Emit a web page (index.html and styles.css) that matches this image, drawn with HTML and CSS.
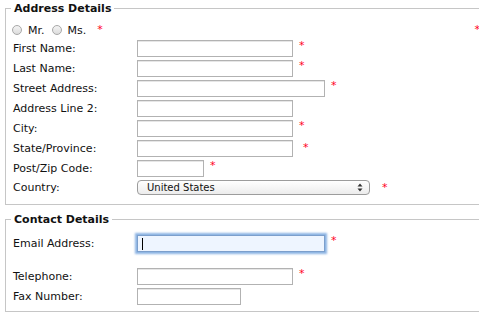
FILE: index.html
```
<!DOCTYPE html>
<html lang="en">
<head>
  <meta charset="UTF-8" />
  <meta name="viewport" content="width=device-width, initial-scale=1.0"/>
  <title>Registration - Address Form</title>
  <link rel="stylesheet" href="styles.css">
</head>
<body>

  <form class="signup" id="signupForm">
    <fieldset class="group">
      <legend>Address Details</legend>

      <div class="salutation">
        <label class="choice"><input type="radio" name="title" value="mr"> Mr.</label>
        <label class="choice"><input type="radio" name="title" value="ms"> Ms.</label>
        <span class="req">*</span>
        <span class="req req-far">*</span>
      </div>

      <div class="row">
        <label for="first">First Name:</label>
        <input type="text" id="first" class="w-md">
        <span class="req">*</span>
      </div>
      <div class="row">
        <label for="last">Last Name:</label>
        <input type="text" id="last" class="w-md">
        <span class="req">*</span>
      </div>
      <div class="row">
        <label for="street">Street Address:</label>
        <input type="text" id="street" class="w-lg">
        <span class="req">*</span>
      </div>
      <div class="row">
        <label for="line2">Address Line 2:</label>
        <input type="text" id="line2" class="w-md">
      </div>
      <div class="row">
        <label for="city">City:</label>
        <input type="text" id="city" class="w-md">
        <span class="req">*</span>
      </div>
      <div class="row">
        <label for="state">State/Province:</label>
        <input type="text" id="state" class="w-md">
        <span class="req req-wide">*</span>
      </div>
      <div class="row">
        <label for="zip">Post/Zip Code:</label>
        <input type="text" id="zip" class="w-sm">
        <span class="req">*</span>
      </div>
      <div class="row">
        <label for="country">Country:</label>
        <span class="select">
          <select id="country">
            <option>United States</option>
            <option>Canada</option>
            <option>United Kingdom</option>
          </select>
          <svg class="select-arrows" width="6" height="9" viewBox="0 0 6 9">
            <path d="M3 0.5 L5.5 3.5 L0.5 3.5 Z M3 8.5 L5.5 5.5 L0.5 5.5 Z" fill="#333"/>
          </svg>
        </span>
        <span class="req req-select">*</span>
      </div>
    </fieldset>

    <fieldset class="group group-contact">
      <legend>Contact Details</legend>

      <div class="row row-email">
        <label for="email">Email Address:</label>
        <input type="email" id="email" class="w-lg is-focused">
        <span class="req">*</span>
      </div>
      <div class="row">
        <label for="phone">Telephone:</label>
        <input type="text" id="phone" class="w-md">
        <span class="req">*</span>
      </div>
      <div class="row">
        <label for="fax">Fax Number:</label>
        <input type="text" id="fax" class="w-xs">
      </div>
    </fieldset>
  </form>

</body>
</html>
```

FILE: styles.css
```
html {
  overflow: hidden;
}
body {
  margin: 0;
  background-color: white;
  font-family: "DejaVu Sans", Verdana, sans-serif;
  font-size: 11px;
  color: #111;
}
.signup {
  padding-top: 2px;
}
.group {
  margin: 0 0 0 5px;
  width: 476px;
  box-sizing: border-box;
  padding: 8px 0 9px 7px;
  border: 1px solid #c6c6c6;
  border-right: none;
  display: flex;
  flex-direction: column;
  gap: 3px;
}
.group legend {
  font-weight: bold;
  line-height: 13px;
  padding: 0 3px;
  margin-left: -2px;
}
.group-contact {
  margin-top: 8px;
  padding-top: 9px;
  padding-bottom: 6px;
}
.salutation {
  display: flex;
  align-items: center;
  height: 14px;
}
.choice {
  display: flex;
  align-items: center;
  margin-right: 7px;
  margin-left: -1px;
}
.choice + .choice {
  margin-left: 0;
}
.choice input {
  appearance: none;
  width: 10px;
  height: 10px;
  margin: 0 6px 0 0;
  border: 1px solid #a8a8a8;
  border-radius: 50%;
  background: linear-gradient(#f4f4f4, #dcdcdc);
  box-sizing: border-box;
}
.salutation .req {
  align-self: flex-start;
  margin-left: 4px;
  margin-top: 1px;
}
.salutation .req-far {
  margin-left: auto;
  margin-right: 1px;
}
.row {
  display: flex;
  align-items: center;
}
.row label {
  width: 124px;
  flex-shrink: 0;
}
.row input {
  height: 17px;
  margin: 0;
  padding: 0 3px;
  border: 1px solid #b2b2b2;
  box-shadow: inset 0 1px 0 #e6e6e6;
  box-sizing: border-box;
  font: inherit;
}
.w-xs { width: 104px; }
.w-sm { width: 67px; }
.w-md { width: 156px; }
.w-lg { width: 188px; }
.req {
  align-self: flex-start;
  color: #ff0022;
  font-size: 11px;
  line-height: 11px;
  margin-left: 6px;
  margin-top: 0;
}
.req-wide {
  margin-left: 10px;
  margin-top: 2px;
}
.req-select {
  margin-left: 12px;
  margin-top: 2px;
}
.select {
  position: relative;
  display: block;
}
.select select {
  appearance: none;
  display: block;
  width: 233px;
  height: 15px;
  margin: 0;
  padding: 0 0 0 9px;
  border: 1px solid #9c9c9c;
  border-radius: 4px;
  background: linear-gradient(#ffffff, #ececec);
  font-family: "DejaVu Sans", sans-serif;
  font-size: 10px;
  line-height: 13px;
  color: #111;
}
.select-arrows {
  position: absolute;
  right: 7px;
  top: 3px;
  pointer-events: none;
}
.row-email {
  margin-bottom: 13px;
}
.row .is-focused {
  background: linear-gradient(#000, #000) no-repeat 4px 2px / 1px 12px, #eef5ff;
  border-color: #7c9fcc;
  box-shadow: 0 0 2px 2px #8bb3e3;
  outline: none;
}
```
